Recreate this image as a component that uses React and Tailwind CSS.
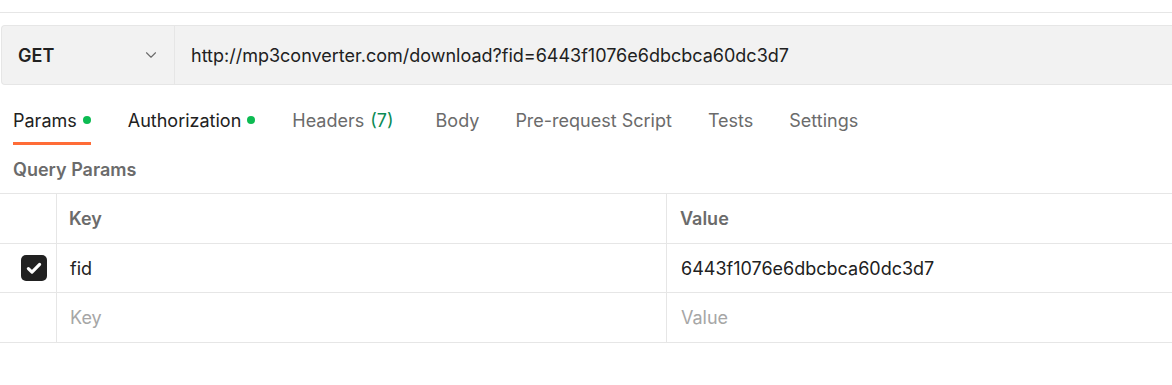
import { ChevronDown } from "lucide-react";

const tabs = [
  { name: "Params", active: true, dot: true },
  { name: "Authorization", dot: true, dark: true, ml: "ml-px" },
  { name: "Headers", count: "(7)", ml: "ml-px mr-[5px]" },
  { name: "Body", ml: "ml-px" },
  { name: "Pre-request Script" },
  { name: "Tests" },
  { name: "Settings" },
];

function App() {
  return (
    <div className="w-[1172px] h-[385px] bg-white overflow-hidden text-[#212121]" style={{ fontFamily: "Inter, 'Noto Sans', sans-serif" }}>
      <div className="h-[13px] border-b border-[#e6e6e6]"></div>

      <div className="mt-[12px] ml-px h-[60px] flex bg-[#f2f2f2] border border-r-0 border-[#e6e6e6] rounded-l-[4px]">
        <div className="w-[173px] flex items-center justify-between pl-[16px] pr-[14px] border-r border-[#e6e6e6]">
          <span className="text-[18px] font-semibold">GET</span>
          <ChevronDown size={18} strokeWidth={1.5} className="text-[#6b6b6b]" />
        </div>
        <div className="flex items-center pl-[16px] text-[18px]">
          http://mp3converter.com/download?fid=6443f1076e6dbcbca60dc3d7
        </div>
      </div>

      <div className="flex gap-[36px] pl-[13px] mt-[17px]">
        {tabs.map((t) => (
          <div key={t.name} className={"flex flex-col " + (t.ml || "")}>
            <div className="h-[40px] pb-[4px] flex items-center gap-[6px] text-[18px]">
              <span className={t.active || t.dark ? "text-[#212121]" : "text-[#6b6b6b]"}>
                {t.name}
                {t.count && <span className="text-[#0b8a55] ml-[6px]">{t.count}</span>}
              </span>
              {t.dot && <span className="w-[8px] h-[8px] rounded-full bg-[#0cbb52]"></span>}
            </div>
            <div className={"h-[3px] " + (t.active ? "bg-[#ff6c37]" : "")}></div>
          </div>
        ))}
      </div>

      <div className="h-[48px] flex items-center pl-[13px] text-[18px] font-semibold text-[#6b6b6b]">
        Query Params
      </div>

      <div className="border-t border-[#e6e6e6]">
        <div className="flex h-[50px] border-b border-[#e6e6e6]">
          <div className="w-[57px] border-r border-[#e6e6e6]"></div>
          <div className="w-[610px] flex items-center pl-[12px] text-[18px] font-semibold text-[#6b6b6b] border-r border-[#e6e6e6]">Key</div>
          <div className="flex-1 flex items-center pl-[13px] text-[18px] font-semibold text-[#6b6b6b]">Value</div>
        </div>
        <div className="flex h-[49px] border-b border-[#e6e6e6]">
          <div className="w-[57px] flex items-center justify-end pr-[9px] border-r border-[#e6e6e6]">
            <span className="w-[26px] h-[26px] rounded-[5px] bg-[#212121] flex items-center justify-center">
              <svg width="18" height="18" viewBox="0 0 16 16" fill="none">
                <path d="M3 8.5l3.2 3.2L13 4.8" stroke="white" strokeWidth="2.8" strokeLinecap="round" strokeLinejoin="round" />
              </svg>
            </span>
          </div>
          <div className="w-[610px] flex items-center pl-[13px] text-[18px] border-r border-[#e6e6e6]">fid</div>
          <div className="flex-1 flex items-center pl-[14px] text-[18px]">6443f1076e6dbcbca60dc3d7</div>
        </div>
        <div className="flex h-[50px] border-b border-[#e6e6e6]">
          <div className="w-[57px] border-r border-[#e6e6e6]"></div>
          <div className="w-[610px] flex items-center pl-[13px] text-[18px] text-[#a6a6a6] border-r border-[#e6e6e6]">Key</div>
          <div className="flex-1 flex items-center pl-[14px] text-[18px] text-[#a6a6a6]">Value</div>
        </div>
      </div>
    </div>
  );
}

export default App;
